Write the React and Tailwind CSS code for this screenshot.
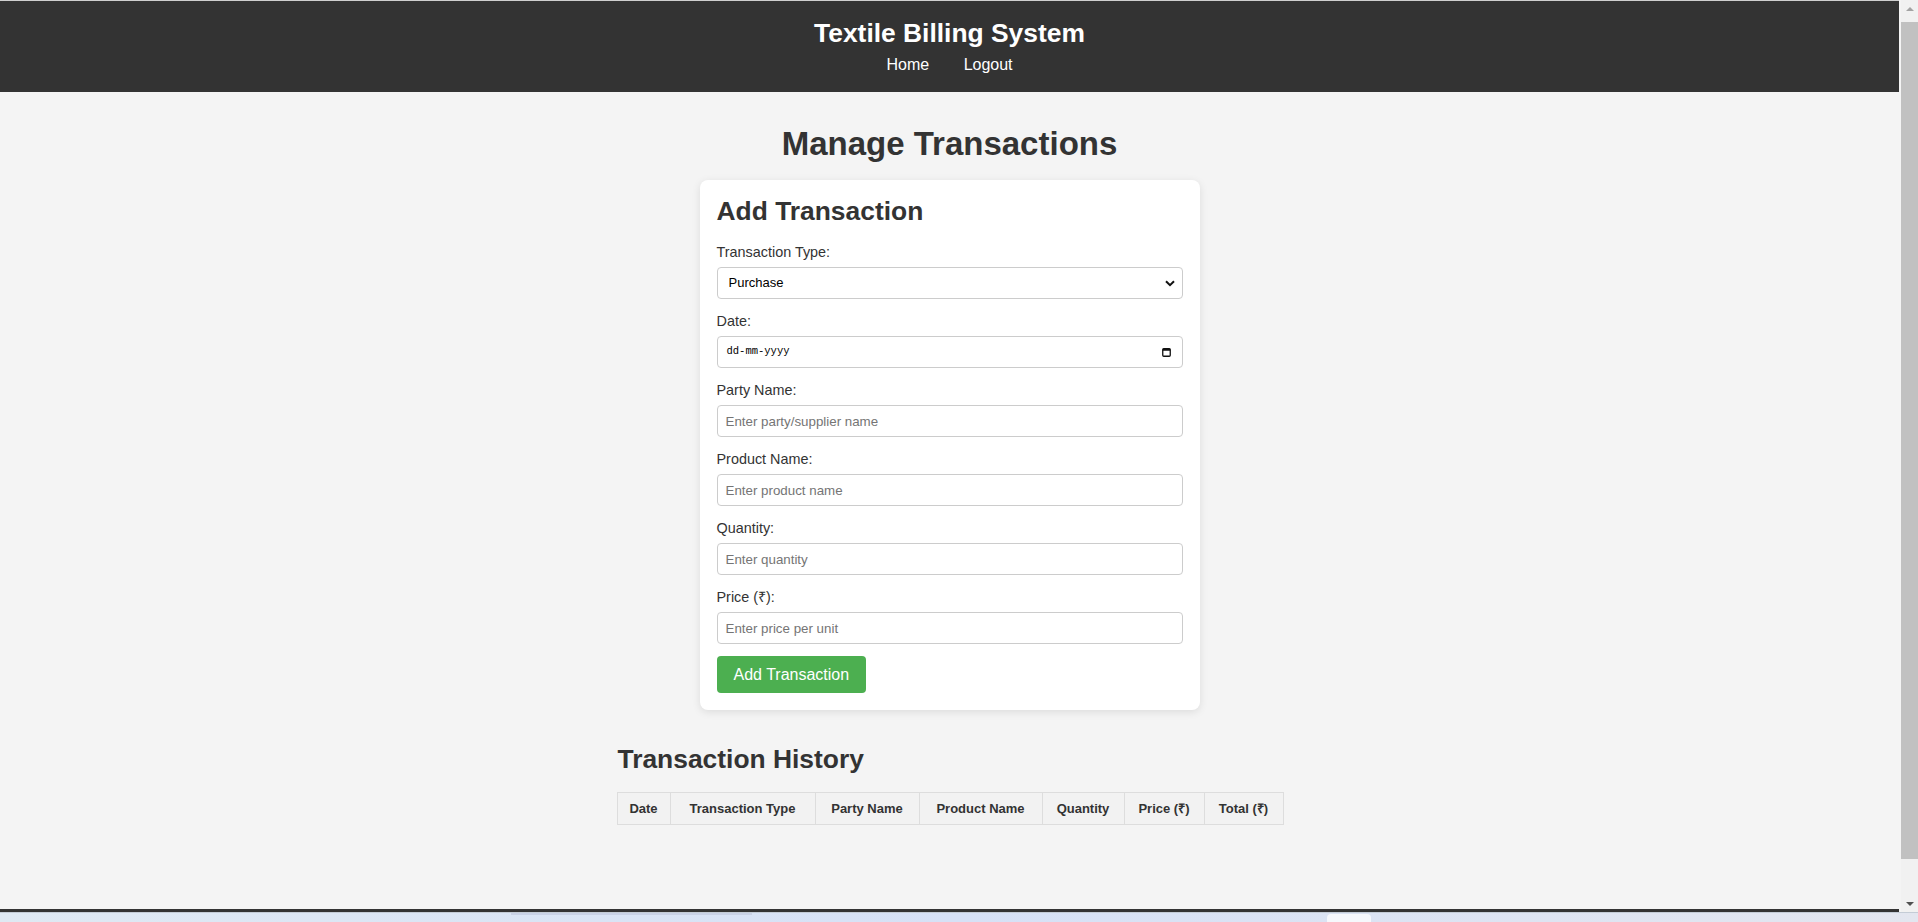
import { useState } from "react";

const FIELDS = [
  { label: "Party Name:", placeholder: "Enter party/supplier name" },
  { label: "Product Name:", placeholder: "Enter product name" },
  { label: "Quantity:", placeholder: "Enter quantity" },
  { label: "Price (₹):", placeholder: "Enter price per unit" },
];

const COLUMNS = [
  { title: "Date", width: "w-[53px]" },
  { title: "Transaction Type", width: "w-[145px]" },
  { title: "Party Name", width: "w-[104px]" },
  { title: "Product Name", width: "w-[123px]" },
  { title: "Quantity", width: "w-[82px]" },
  { title: "Price (₹)", width: "w-[80px]" },
  { title: "Total (₹)", width: "w-[79px]" },
];

function Label({ children }) {
  return <label className="block text-[14.4px] leading-[17px] mb-[6px] text-[#333]">{children}</label>;
}

function Header() {
  return (
    <header className="bg-[#333] text-white text-center pt-[17px] pb-[17px]">
      <h1 className="text-[26.4px] leading-[30px] font-bold">Textile Billing System</h1>
      <nav className="mt-[7px] flex justify-center gap-[34.5px] text-[16px] leading-[20px]">
        <a href="#" className="text-white">Home</a>
        <a href="#" className="text-white">Logout</a>
      </nav>
    </header>
  );
}

function TransactionForm() {
  const [type, setType] = useState("Purchase");

  return (
    <div className="w-[500px] mx-auto bg-white rounded-lg shadow-[0_2px_8px_rgba(0,0,0,0.1)] px-[17px] pt-[16px] pb-[17px]">
      <h2 className="text-[26.4px] leading-[30px] font-bold text-[#333] mb-[18px]">Add Transaction</h2>
      <div className="flex flex-col gap-[14px]">
        <div>
          <Label>Transaction Type:</Label>
          <div className="relative">
            <select
              value={type}
              onChange={(e) => setType(e.target.value)}
              className="w-full h-[32px] appearance-none border border-[#ccc] rounded-[4px] bg-white pl-[11px] text-[13px] text-black"
            >
              <option>Purchase</option>
              <option>Sale</option>
            </select>
            <svg className="absolute right-[8px] top-[13px] pointer-events-none" width="10" height="7" viewBox="0 0 10 7">
              <path d="M1 1.2l4 4 4-4" fill="none" stroke="#111" strokeWidth="2" />
            </svg>
          </div>
        </div>
        <div>
          <Label>Date:</Label>
          <div className="h-[32px] border border-[#ccc] rounded-[4px] bg-white flex items-center justify-between pl-[9px] pr-[11px]">
            <span className="font-['Liberation_Mono',monospace] text-[10.5px] text-black">dd-mm-yyyy</span>
            <svg width="9" height="10" viewBox="0 0 9 10">
              <rect x="0.75" y="1.75" width="7.5" height="7.5" rx="1" fill="none" stroke="#111" strokeWidth="1.3" />
              <rect x="0.75" y="1.75" width="7.5" height="2" fill="#111" />
            </svg>
          </div>
        </div>
        {FIELDS.map((f) => (
          <div key={f.label}>
            <Label>{f.label}</Label>
            <input
              type="text"
              placeholder={f.placeholder}
              className="w-full h-[32px] border border-[#ccc] rounded-[4px] bg-white px-[8px] text-[13.33px] text-black placeholder:text-[#757575]"
            />
          </div>
        ))}
      </div>
      <button className="mt-[12px] h-[37px] px-[17px] rounded-[4px] bg-[#4CAF50] text-white text-[16px] leading-[18px]">
        Add Transaction
      </button>
    </div>
  );
}

function History() {
  return (
    <section className="w-[666px] mx-auto mt-[34px]">
      <h2 className="text-[26.4px] leading-[30px] font-bold text-[#333] mb-[18px] pl-px">Transaction History</h2>
      <table className="w-[666px] table-fixed border-collapse">
        <thead>
          <tr>
            {COLUMNS.map((c) => (
              <th
                key={c.title}
                className={`${c.width} border border-[#ddd] bg-[#f2f2f2] py-[8px] px-0 text-[13px] leading-[15px] font-bold text-[#333] text-center`}
              >
                {c.title}
              </th>
            ))}
          </tr>
        </thead>
        <tbody />
      </table>
    </section>
  );
}

function Scrollbar() {
  return (
    <div className="w-[19px] pl-[2px] bg-[#f4f4f4] flex">
      <div className="w-[17px] bg-[#f1f1f1] flex flex-col">
        <div className="h-[17px] flex items-center justify-center">
          <div className="w-0 h-0 border-l-[4px] border-r-[4px] border-b-[4px] border-l-transparent border-r-transparent border-b-[#a3a3a3]" />
        </div>
        <div className="mt-[5px] h-[837px] bg-[#c1c1c1]" />
        <div className="flex-1" />
        <div className="h-[17px] flex items-center justify-center">
          <div className="w-0 h-0 border-l-[4px] border-r-[4px] border-t-[4px] border-l-transparent border-r-transparent border-t-[#505050]" />
        </div>
      </div>
    </div>
  );
}

function Taskbar() {
  return (
    <div className="h-[10px] border-t border-[#c4ccd6] bg-gradient-to-r from-[#dfe9f3] via-[#d6e1f6] to-[#e3e6ef] flex">
      <div className="w-[511px]" />
      <div className="w-[241px] h-[2px] bg-[#c9d2e6]" />
      <div className="w-[575px]" />
      <div className="w-[44px] h-[9px] mt-[1px] rounded-t-[4px] bg-[#f6f8fc]" />
    </div>
  );
}

export default function App() {
  return (
    <div className="w-[1918px] h-[922px] overflow-hidden flex flex-col font-['Liberation_Sans',Arial,sans-serif] text-[#333]">
      <div className="h-[912px] flex">
        <div className="flex-1 flex flex-col bg-[#f4f4f4]">
          <div className="h-px bg-[#cfcfcf]" />
          <Header />
          <main className="flex-1">
            <h1 className="mt-[33px] mb-[17px] text-center text-[33px] leading-[38px] font-bold text-[#333]">
              Manage Transactions
            </h1>
            <TransactionForm />
            <History />
          </main>
          <div className="h-[3px] bg-[#333]" />
        </div>
        <Scrollbar />
      </div>
      <Taskbar />
    </div>
  );
}
